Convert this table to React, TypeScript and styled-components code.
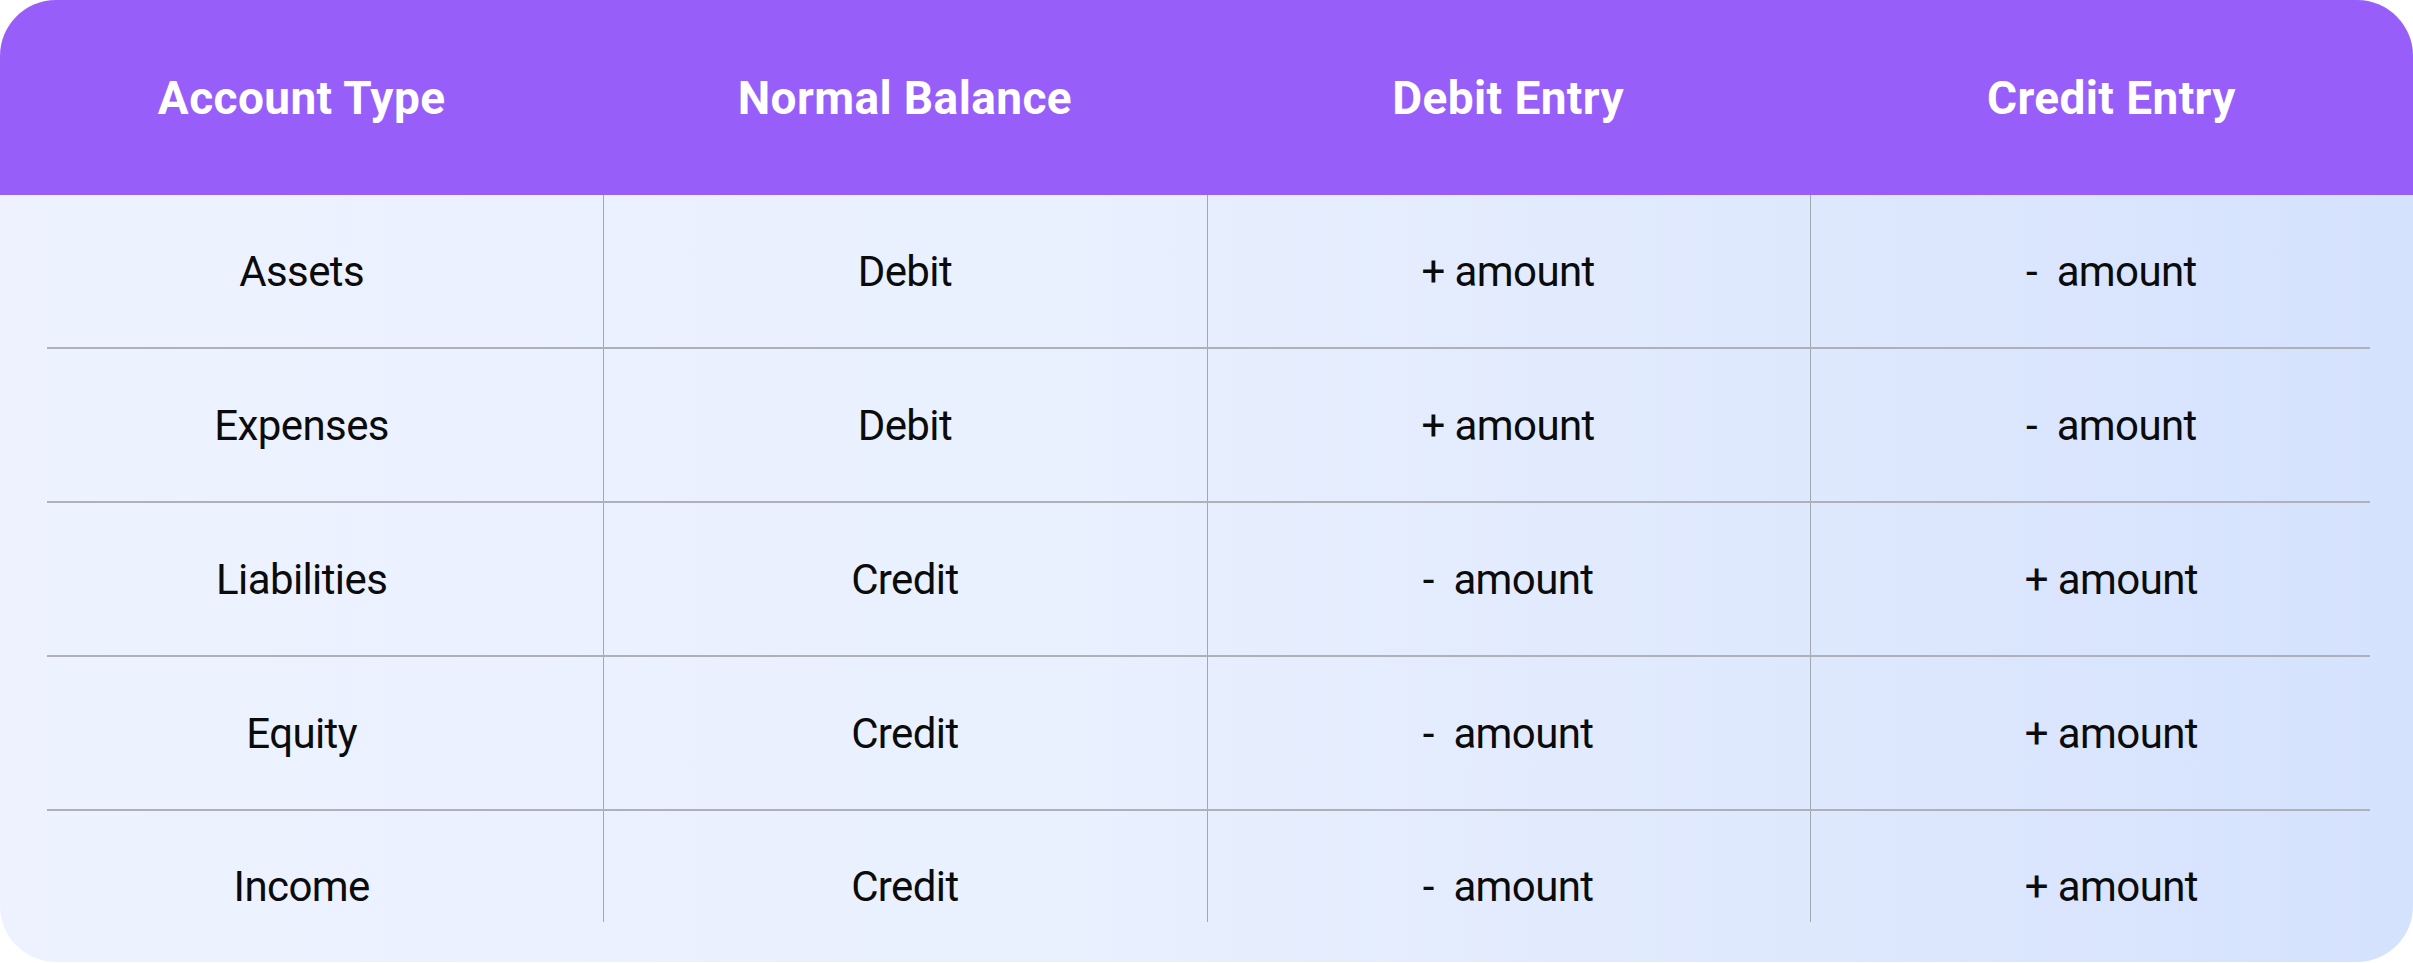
import React from 'react';
import styled, { createGlobalStyle } from 'styled-components';

const COLUMNS = ['Account Type', 'Normal Balance', 'Debit Entry', 'Credit Entry'];

const ROWS = [
  ['Assets', 'Debit', '+ amount', '-  amount'],
  ['Expenses', 'Debit', '+ amount', '-  amount'],
  ['Liabilities', 'Credit', '-  amount', '+ amount'],
  ['Equity', 'Credit', '-  amount', '+ amount'],
  ['Income', 'Credit', '-  amount', '+ amount'],
];

const App: React.FC = () => {
  return (
    <>
      <GlobalStyle />
      <Card>
        <HeaderRow>
          {COLUMNS.map((title) => (
            <HeaderCell key={title}>{title}</HeaderCell>
          ))}
        </HeaderRow>
        <Body>
          {ROWS.map((row, i) => {
            const last = i === ROWS.length - 1;
            return (
              <React.Fragment key={row[0]}>
                <Row $last={last}>
                  {row.map((value, j) => (
                    <Cell key={j} $ruled={j > 0} $last={last}>
                      {value}
                    </Cell>
                  ))}
                </Row>
                {!last && <RowRule />}
              </React.Fragment>
            );
          })}
        </Body>
      </Card>
    </>
  );
};

const GlobalStyle = createGlobalStyle`
  html, body {
    margin: 0;
    padding: 0;
    background: #ffffff;
  }

  body {
    font-family: Roboto, 'Liberation Sans', sans-serif;
  }
`;

const Card = styled.div`
  width: 2413px;
  height: 962px;
  border-radius: 56px;
  overflow: hidden;
  display: flex;
  flex-direction: column;
  background: linear-gradient(90deg, #edf2fe 0%, #e9f0fe 45%, #d5e2fd 100%);
`;

const HeaderRow = styled.div`
  display: grid;
  grid-template-columns: repeat(4, 1fr);
  height: 195px;
  background: #985efa;
`;

const HeaderCell = styled.div`
  display: flex;
  align-items: center;
  justify-content: center;
  color: #ffffff;
  font-size: 46px;
  font-weight: 700;
  letter-spacing: 0.4px;
`;

const Body = styled.div`
  flex: 1;
  display: flex;
  flex-direction: column;
`;

const Row = styled.div<{ $last: boolean }>`
  display: grid;
  grid-template-columns: repeat(4, 1fr);
  height: ${(p) => (p.$last ? '150px' : '152px')};
`;

const Cell = styled.div<{ $ruled: boolean; $last: boolean }>`
  display: flex;
  align-items: center;
  justify-content: center;
  white-space: pre;
  color: #0b0b0b;
  font-size: 42px;
  font-weight: 400;
  letter-spacing: -0.6px;
  background: ${(p) =>
    p.$ruled
      ? `linear-gradient(#a3a7b0, #a3a7b0) left top / 1px ${
          p.$last ? 'calc(100% - 39px)' : '100%'
        } no-repeat`
      : 'none'};
`;

const RowRule = styled.div`
  height: 2px;
  margin: 0 43px 0 47px;
  background: #aeb1b8;
`;

export default App;
